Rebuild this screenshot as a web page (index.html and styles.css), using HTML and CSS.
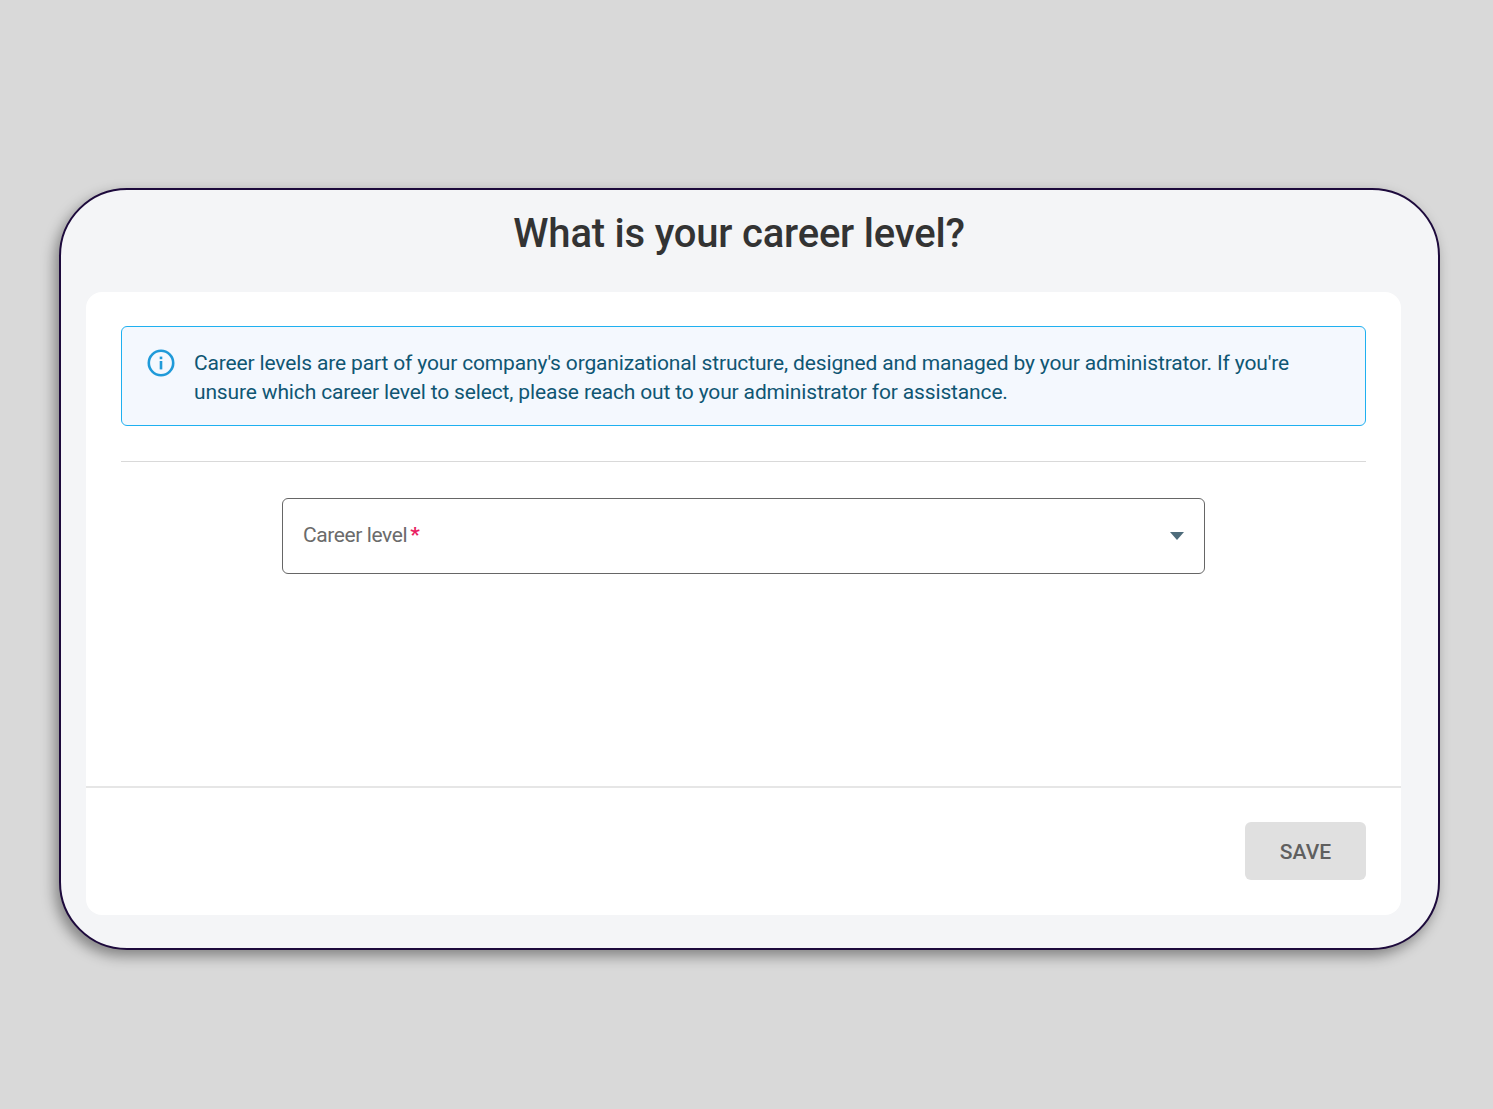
FILE: index.html
```html
<!DOCTYPE html>
<html lang="en">
  <head>
    <meta charset="UTF-8" />
    <meta name="viewport" content="width=device-width, initial-scale=1.0" />
    <title>Career level</title>
    <link rel="stylesheet" href="styles.css">
  </head>
  <body>
    <div class="dialog">
      <h1 class="dialog-title">What is your career level?</h1>
      <div class="dialog-card">
        <div class="dialog-body">
          <div class="info-box">
            <svg class="info-icon" width="28" height="28" viewBox="0 0 28 28" fill="none">
              <circle cx="14" cy="14" r="12.2" stroke="#1f9ad9" stroke-width="2.6" />
              <rect x="12.7" y="12" width="2.6" height="8.4" fill="#1f9ad9" />
              <rect x="12.7" y="7.6" width="2.6" height="2.6" fill="#1f9ad9" />
            </svg>
            <p class="info-text">Career levels are part of your company's organizational structure, designed and managed by your administrator. If you're unsure which career level to select, please reach out to your administrator for assistance.</p>
          </div>
          <hr class="divider" />
          <div class="select-field">
            <span class="select-label">Career level<span class="required">*</span></span>
            <span class="select-arrow"></span>
          </div>
        </div>
        <div class="dialog-footer">
          <button class="save-button" type="button" disabled>SAVE</button>
        </div>
      </div>
    </div>
  </body>
</html>
```

FILE: styles.css
```css
/* General reset */
* {
  margin: 0;
  padding: 0;
  box-sizing: border-box;
  font-family: Roboto, Arial, sans-serif;
}

body {
  min-height: 100vh;
  background: #d9d9d9;
  padding: 188px 53px 0 59px;
}

/* Outer dialog */
.dialog {
  height: 762px;
  background: #f4f5f7;
  border: 2px solid #1d0a3c;
  border-radius: 68px;
  box-shadow: -4px 6px 14px rgba(0, 0, 0, 0.4);
  padding: 0 37px 33px 25px;
  display: flex;
  flex-direction: column;
}

.dialog-title {
  height: 102px;
  padding-top: 16px;
  padding-right: 9px;
  text-align: center;
  font-size: 40px;
  line-height: 56px;
  font-weight: 500;
  color: #333333;
  letter-spacing: -0.2px;
}

/* White card */
.dialog-card {
  flex: 1;
  background: #ffffff;
  border-radius: 16px;
  display: flex;
  flex-direction: column;
}

.dialog-body {
  height: 496px;
  padding: 34px 35px 0;
  border-bottom: 2px solid #e6e6e6;
}

/* Info box */
.info-box {
  height: 100px;
  background: #f4f8fe;
  border: 1.5px solid #1fb0f0;
  border-radius: 6px;
  padding: 22px 24px 0 25px;
  display: flex;
  gap: 19px;
}

.info-icon {
  flex-shrink: 0;
}

.info-text {
  font-size: 21px;
  line-height: 29px;
  color: #0f5673;
  letter-spacing: -0.15px;
}

.divider {
  border: none;
  border-top: 1px solid #d9d9d9;
  margin-top: 35px;
}

/* Select */
.select-field {
  width: 923px;
  height: 76px;
  margin: 36px 0 0 161px;
  border: 1.5px solid #666666;
  border-radius: 6px;
  padding: 0 20px;
  display: flex;
  align-items: center;
  justify-content: space-between;
}

.select-label {
  font-size: 21px;
  color: #6b6b6b;
  margin-top: -3px;
  letter-spacing: -0.4px;
}

.required {
  color: #e91e63;
  font-weight: 700;
  margin-left: 3px;
}

.select-arrow {
  width: 0;
  height: 0;
  border-left: 7.5px solid transparent;
  border-right: 7.5px solid transparent;
  border-top: 8px solid #4d6b7a;
}

/* Footer */
.dialog-footer {
  flex: 1;
  display: flex;
  justify-content: flex-end;
  align-items: flex-start;
  padding: 34px 35px 0 0;
}

.save-button {
  width: 121px;
  height: 58px;
  padding-top: 2px;
  background: #e0e0e0;
  color: #5f5f5f;
  border: none;
  border-radius: 6px;
  font-size: 21px;
  font-weight: 500;
  letter-spacing: 0.1px;
}
```
